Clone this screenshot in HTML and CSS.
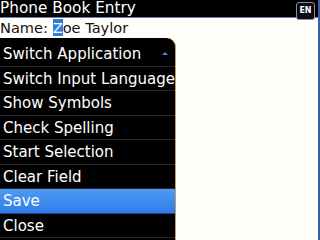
FILE: index.html
```html
<!DOCTYPE html>
<html lang="en">
<head>
    <meta charset="UTF-8">
    <title>Phone Book Entry</title>
    <link rel="stylesheet" href="styles.css">
</head>
<body>
    <div class="screen">
        <div class="titlebar">
            <span class="title">Phone Book Entry</span>
            <span class="lang">EN</span>
        </div>
        <div class="field">Name: <span class="cursor">Z</span>oe Taylor</div>

        <div class="menu">
            <div class="item first">Switch Application <span class="arrow"></span></div>
            <div class="item">Switch Input Language</div>
            <div class="item">Show Symbols</div>
            <div class="item">Check Spelling</div>
            <div class="item">Start Selection</div>
            <div class="item">Clear Field</div>
            <div class="item selected">Save</div>
            <div class="item">Close</div>
        </div>
    </div>
</body>
</html>
```

FILE: styles.css
```css
html, body {
    margin: 0;
    padding: 0;
}

body {
    font-family: "DejaVu Sans", sans-serif;
    background: #fffefa;
    width: 320px;
    height: 240px;
    overflow: hidden;
}

.screen {
    position: relative;
    width: 320px;
    height: 240px;
    border-right: 2px solid #3a5fa8;
    box-sizing: border-box;
}

.titlebar {
    background: #000;
    color: #fff;
    height: 17px;
    border-bottom: 1px solid #6c7fa8;
    display: flex;
    align-items: center;
    justify-content: space-between;
    font-size: 15.3px;
    line-height: 17px;
}

.lang {
    position: absolute;
    top: 2px;
    right: 3px;
    width: 19px;
    height: 18px;
    background: #0a0a14;
    border: 1px solid #8a8fa0;
    border-radius: 3px;
    box-sizing: border-box;
    font-size: 8px;
    font-weight: bold;
    line-height: 16px;
    text-align: center;
    color: #fff;
}

.field {
    font-size: 14.6px;
    line-height: 17px;
    color: #111;
    padding-top: 1px;
}

.cursor {
    background: #2f7fe0;
    color: #fff;
}

.menu {
    position: absolute;
    left: 0;
    top: 38px;
    width: 176px;
    bottom: 0;
    background: #000;
    border-top-right-radius: 9px;
    border-right: 1px solid #c89a5a;
    padding-top: 4px;
    box-sizing: border-box;
}

.item {
    position: relative;
    height: 24.5px;
    line-height: 24px;
    padding-left: 3px;
    color: #fff;
    font-size: 15px;
    border-bottom: 1px solid #262626;
    box-sizing: border-box;
}

.item.selected {
    background: linear-gradient(#4f9af6, #2f7ee8);
    border-bottom-color: #1a3f9a;
}

.arrow {
    position: absolute;
    right: 7px;
    top: 10px;
    width: 0;
    height: 0;
    border-left: 3px solid transparent;
    border-right: 3px solid transparent;
    border-bottom: 3px solid #3a8cff;
}
```
